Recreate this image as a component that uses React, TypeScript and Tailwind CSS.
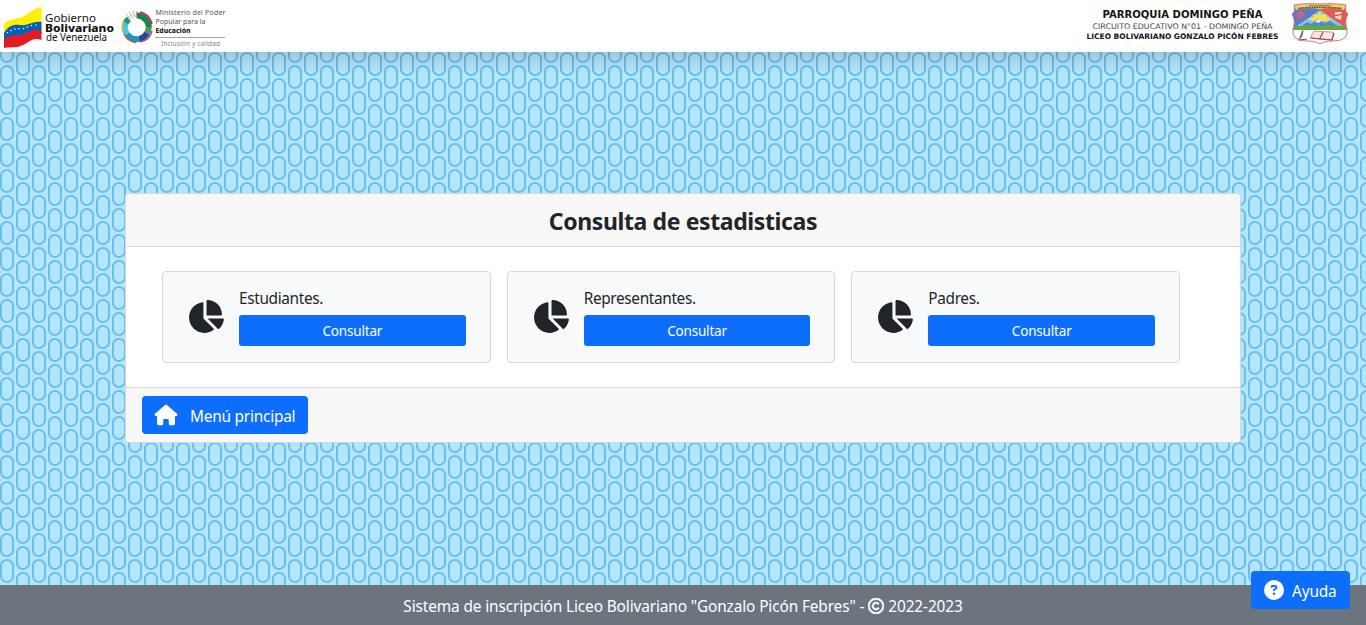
import { FaChartPie, FaCircleQuestion, FaRegCopyright } from "react-icons/fa6";

const PILL =
  "M14 0v3.994C14 7.864 10.858 11 7 11c-3.866 0-7-3.138-7-7.006V0h2v4.005C2 6.765 4.24 9 7 9c2.756 0 5-2.236 5-4.995V0h2zm0 26v-5.994C14 16.138 10.866 13 7 13c-3.858 0-7 3.137-7 7.006V26h2v-6.005C2 17.235 4.244 15 7 15c2.76 0 5 2.236 5 4.995V26h2zm2-18.994C16 3.136 19.142 0 23 0c3.866 0 7 3.138 7 7.006v9.988C30 20.864 26.858 24 23 24c-3.866 0-7-3.138-7-7.006V7.006zm2-.01C18 4.235 20.244 2 23 2c2.76 0 5 2.236 5 4.995v10.01C28 19.765 25.756 22 23 22c-2.76 0-5-2.236-5-4.995V6.995z";

function Backdrop() {
  return (
    <svg className="absolute inset-0 h-full w-full" aria-hidden="true">
      <defs>
        <pattern id="pills" width="32" height="26" patternUnits="userSpaceOnUse">
          <path d={PILL} fill="#6abfeb" fillRule="evenodd" />
        </pattern>
      </defs>
      <rect width="100%" height="100%" fill="url(#pills)" />
    </svg>
  );
}

function FlagLogo() {
  return (
    <svg className="h-[42px] w-[38px] shrink-0" viewBox="0 0 38 42">
      <path d="M0 17C7 10 13 13 20 9C27 5 30 1 37.500 0V17C28 15 25 24 17 24C9 24 6 24 0 31Z" fill="#fff000" />
      <path d="M0 26C5 18 10 17 16 18C25 19 28 14 37.500 15V27C29 23 26 30 17 32C9 34 6 31 0 36Z" fill="#0860b4" />
      <path d="M0 34C5 26 11 29 17 28C26 26 29 20 37.500 24V33C29 30 27 34 19 38C10 42 8 39 0 41Z" fill="#e51b23" />
      <g fill="#fff">
        <circle cx="3.500" cy="25.500" r=".75" />
        <circle cx="7" cy="23.500" r=".75" />
        <circle cx="11" cy="22" r=".75" />
        <circle cx="15" cy="21.800" r=".75" />
        <circle cx="19.500" cy="21.500" r=".75" />
        <circle cx="23.500" cy="20" r=".75" />
        <circle cx="27.500" cy="18.500" r=".75" />
        <circle cx="32" cy="18" r=".75" />
      </g>
    </svg>
  );
}

function MinistryLogo() {
  return (
    <svg className="h-[33px] w-[33px] shrink-0" viewBox="0 0 33 33">
      <g fill="none" strokeWidth="6">
        <path d="M15.500 4.500A12 12 0 0 1 27.800 16" stroke="#15864f" />
        <path d="M27.800 16A12 12 0 0 1 26 22" stroke="#4a9b46" />
        <path d="M26 22A12 12 0 0 1 18 28" stroke="#2b4793" />
        <path d="M18 28A12 12 0 0 1 6 23" stroke="#1698c5" />
        <path d="M6 23A12 12 0 0 1 4.500 12" stroke="#45c8df" />
        <path d="M4.500 12A12 12 0 0 1 8 8" stroke="#119d8e" />
      </g>
      <g fill="none" strokeWidth="1.500">
        <path d="M19 1A15 15 0 0 1 31 13" stroke="#d61f55" />
        <path d="M31 20A15 15 0 0 1 19 31" stroke="#9a51a0" />
        <path d="M15 31.500A15 15 0 0 1 3 23" stroke="#e34b32" />
        <path d="M2 21A15 15 0 0 1 3 9" stroke="#f3b229" />
      </g>
      <path d="M5 3L10 8M8 1L12 7M12 0L14 6M16 0L15 6" stroke="#e98a72" strokeWidth=".8" />
    </svg>
  );
}

function SchoolCrest() {
  return (
    <svg className="h-[42px] w-[58px] shrink-0" viewBox="0 0 58 42">
      <defs>
        <clipPath id="crest">
          <path d="M3 2Q12 0 29 1Q46 0 55 2Q53 8 57 11Q53 18 56 26Q58 38 42 38Q33 38 29 41Q25 38 16 38Q0 38 2 26Q5 18 1 11Q5 8 3 2Z" />
        </clipPath>
      </defs>
      <g clipPath="url(#crest)">
        <path d="M0 0H58V42H0Z" fill="#fff" />
        <path d="M0 0H29V25H0Z" fill="#5b7cce" />
        <path d="M29 0H58V25H29Z" fill="#e05a58" />
        <path d="M29 7L55 25H3Z" fill="#8cc5ec" />
        <path d="M29 9L31 12L35 11L35 14L41 16L35 18H23L17 16L23 14L22 11L26 12Z" fill="#ffe13b" />
        <path d="M8 25L16 19L20 21L28 15L34 20L39 18L50 25Z" fill="#5a86c4" />
        <path d="M24 19L28 15L33 19L30 18L28 20Z" fill="#d8ebf8" />
        <path d="M0 24Q15 21 29 23Q43 21 58 24V27H0Z" fill="#60a947" />
        <path d="M6 10Q11 6 14 11L10 16L6 15Z" fill="#d86069" />
        <path d="M44 9L51 9L50 17L44 15Z" fill="#f2d7ba" />
        <path d="M43 13L52 11" stroke="#9b4950" />
        <path d="M3 2Q12 0 29 1Q46 0 55 2L53 7Q40 4 29 6Q15 4 5 7Z" fill="#efd267" />
      </g>
      <path d="M7 5.500Q28 3 51 5.500" stroke="#65532c" strokeWidth="1.700" strokeDasharray="1.700 .6" fill="none" />
      <path d="M18 2.500H40" stroke="#8a702f" strokeDasharray="1.300 .5" />
      <path d="M23 28L40 29L43 30L41 37L19 35Z" fill="#f4e7e5" stroke="#a87076" strokeWidth=".7" />
      <path d="M32 29L29 35M20 35L41 37L43 30" fill="none" stroke="#ba3948" strokeWidth="1.200" />
      <path d="M12 26Q13 30 10 36Q9 31 12 26Z" fill="#7c878e" />
      <path d="M12 28L8 37L16 36" fill="none" stroke="#59656e" strokeWidth="1.100" />
      <path d="M3 2Q12 0 29 1Q46 0 55 2Q53 8 57 11Q53 18 56 26Q58 38 42 38Q33 38 29 41Q25 38 16 38Q0 38 2 26Q5 18 1 11Q5 8 3 2Z" fill="none" stroke="#d66a70" strokeWidth=".9" />
    </svg>
  );
}

function HouseIcon() {
  return (
    <svg className="mr-3 h-[22px] w-6" viewBox="0 0 24 22" fill="#fff">
      <path d="M11.100.9Q12 .2 12.900.9L23 9.800Q23.800 10.700 23.200 11.400Q22.900 11.900 22.200 11.900H21V19.500Q21 21.300 19.300 21.300H16Q14.800 21.300 14.800 20V16.200Q14.800 15 13.600 15H10.400Q9.200 15 9.200 16.200V20Q9.200 21.300 8 21.300H4.700Q3 21.300 3 19.500V11.900H1.800Q1.100 11.900.8 11.400Q.2 10.700 1 9.800Z" />
    </svg>
  );
}

function Header() {
  return (
    <header className="relative flex h-[52px] shrink-0 items-start justify-between bg-white pl-1 pr-[17px] shadow-[0_8px_16px_rgba(0,0,0,0.15)]">
      <div className="flex">
        <div className="flex pt-[7px]">
          <FlagLogo />
        </div>
        <svg className="ml-[3px] h-[52px] w-[76px]" fontFamily="Noto Sans, sans-serif" fill="#111">
          <text x="0" y="21.500" fontSize="11" textLength="51" lengthAdjust="spacingAndGlyphs">Gobierno</text>
          <text x="0" y="32" fontSize="11" fontWeight="800" textLength="69" lengthAdjust="spacingAndGlyphs">Bolivariano</text>
          <text x="1" y="41" fontSize="10.500" textLength="61" lengthAdjust="spacingAndGlyphs">de Venezuela</text>
        </svg>
        <div className="pt-[11px]">
          <MinistryLogo />
        </div>
        <svg className="ml-px h-[52px] w-[74px]" fontFamily="Noto Sans, sans-serif" fill="#555">
          <text x="0.500" y="15" fontSize="7" textLength="70">Ministerio del Poder</text>
          <text x="0.500" y="24" fontSize="7" textLength="50">Popular para la</text>
          <text x="0.500" y="33" fontSize="7" fontWeight="800" fill="#222" textLength="35" lengthAdjust="spacingAndGlyphs">Educación</text>
          <path d="M0 37.500H70" stroke="#a5a5a5" />
          <text x="6" y="45.500" fontSize="6.600" fill="#888" textLength="59">Inclusión y calidad</text>
        </svg>
      </div>
      <div className="flex gap-3">
        <svg className="h-[52px] w-[194px]" fontFamily="DejaVu Sans, sans-serif" fill="#151515" textAnchor="middle">
          <text x="96.500" y="18.300" fontSize="9.600" fontWeight="700" textLength="160" lengthAdjust="spacingAndGlyphs">PARROQUIA DOMINGO PEÑA</text>
          <text x="96.500" y="29.300" fontSize="7.700" fill="#444" textLength="180" lengthAdjust="spacingAndGlyphs">CIRCUITO EDUCATIVO N°01 - DOMINGO PEÑA</text>
          <text x="96.500" y="39.300" fontSize="7.600" fontWeight="700" textLength="192" lengthAdjust="spacingAndGlyphs">LICEO BOLIVARIANO GONZALO PICÓN FEBRES</text>
        </svg>
        <div className="-ml-px pt-[3px]">
          <SchoolCrest />
        </div>
      </div>
    </header>
  );
}

function StatCard({ title }: { title: string }) {
  return (
    <section className="flex h-[92px] flex-1 items-start rounded border border-[#d5d7d9] bg-[#f8f9fa] pt-[15px] pl-6 pr-6">
      <FaChartPie className="mt-[13px] mr-[15px] h-[33px] w-[37px] shrink-0" />
      <div className="min-w-0 flex-1">
        <p className="mb-1 h-6 text-[15.400px] leading-6 tracking-[-0.360px]">{title}</p>
        <button className="block h-[31px] w-full rounded-[3px] bg-[#0d6efd] pt-px text-[13.500px] leading-[30px] tracking-[-0.180px] text-white">
          Consultar
        </button>
      </div>
    </section>
  );
}

export default function App() {
  return (
    <div className="relative flex h-[625px] w-full flex-col overflow-hidden bg-[#b3e5fc] font-['Noto_Sans',sans-serif] text-[#212529]">
      <Backdrop />
      <Header />
      <main className="relative flex flex-1 items-start justify-center pt-[141px]">
        <div className="w-[1116px] overflow-hidden rounded border border-[#d5d9db] bg-white">
          <h1 className="flex h-[53px] items-center justify-center border-b border-[#d9d9d9] bg-[#f7f7f7] pt-0.5 text-[23px] font-bold tracking-[-0.380px]">
            Consulta de estadisticas
          </h1>
          <div className="flex h-[140px] gap-4 pt-6 pr-[60px] pl-9">
            <StatCard title="Estudiantes." />
            <StatCard title="Representantes." />
            <StatCard title="Padres." />
          </div>
          <div className="h-[55px] border-t border-[#d9d9d9] bg-[#f7f7f7] px-4 pt-2">
            <button className="flex h-[38px] w-[166px] items-center rounded bg-[#0d6efd] pl-3 text-[15.400px] tracking-[-0.220px] whitespace-nowrap text-white">
              <HouseIcon />
              <span className="pt-[3px]">Menú principal</span>
            </button>
          </div>
        </div>
      </main>
      <footer className="relative flex h-10 shrink-0 items-center justify-center bg-[#6c757d] pt-[3px] text-[15.400px] tracking-[-0.120px] text-white">
        <span>Sistema de inscripción Liceo Bolivariano "Gonzalo Picón Febres" -</span>
        <FaRegCopyright className="mx-1 mb-0.5 size-4 stroke-white stroke-[18]" />
        <span>2022-2023</span>
      </footer>
      <button className="absolute right-4 bottom-4 flex h-[38px] w-[99px] items-center rounded bg-[#0d6efd] pl-[13px] text-[15.400px] tracking-[-0.150px] text-white">
        <FaCircleQuestion className="mr-2 size-5" />
        <span className="pt-[3px]">Ayuda</span>
      </button>
    </div>
  );
}
